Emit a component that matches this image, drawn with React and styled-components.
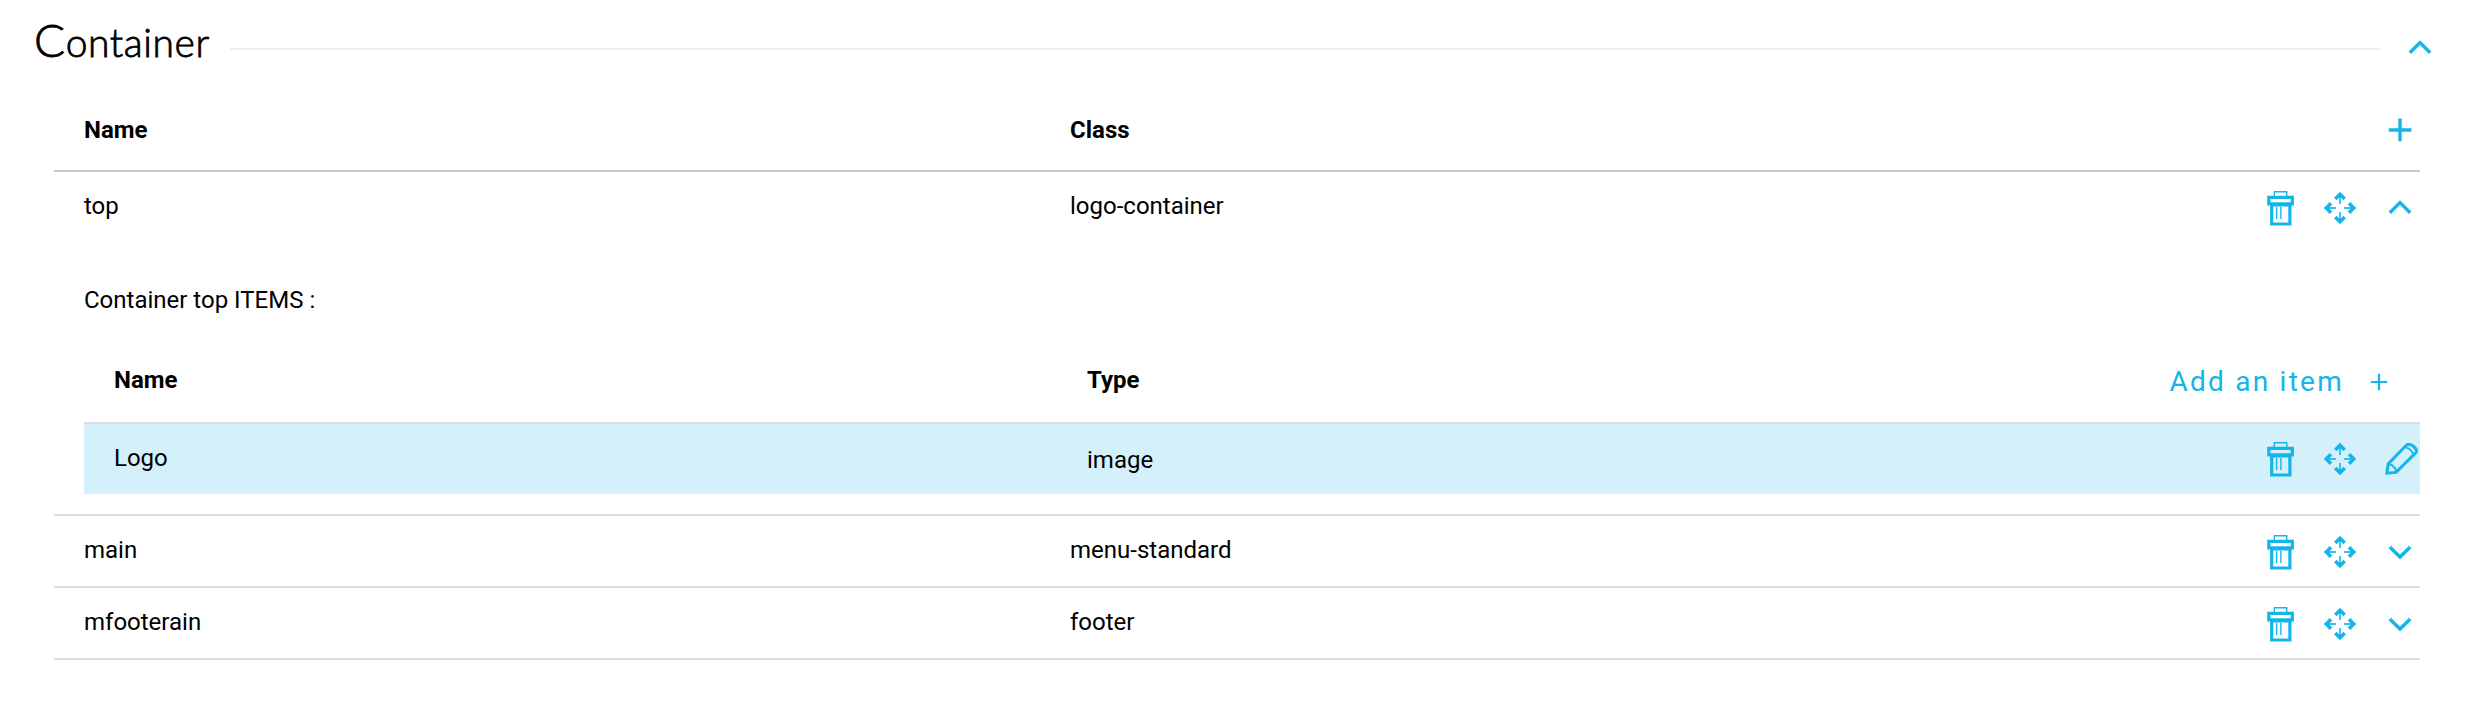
import React from "react";
import styled, { createGlobalStyle } from "styled-components";

const GlobalStyle = createGlobalStyle`
  * { box-sizing: border-box; }
  body {
    margin: 0;
    background: #fff;
    color: #000;
    font-family: Roboto, "Liberation Sans", sans-serif;
    font-size: 24px;
    line-height: 28px;
  }
`;

const Section = styled.section`
  padding-bottom: 48px;
`;

const SectionHeader = styled.header`
  display: flex;
  align-items: center;
  height: 98px;
  padding: 0 36px 0 34px;
`;

const Title = styled.h2`
  width: 196px;
  margin: 0 0 16px;
  font-family: Lato, sans-serif;
  font-weight: 300;
  font-size: 39px;
  line-height: 48px;
  letter-spacing: 0.6px;
  white-space: nowrap;
  -webkit-text-stroke: 0.8px #000;
  &::first-letter {
    font-size: 46px;
  }
`;

const Rule = styled.div`
  flex: 1;
  height: 2px;
  margin-right: 20px;
  background: #eee;
`;

const IconButton = styled.button`
  display: block;
  width: 40px;
  height: 40px;
  margin: 0 0 ${(p) => p.$lift || 0}px;
  padding: 0;
  border: 0;
  background: none;
  color: #13b5ea;
  cursor: pointer;
`;

const Svg = styled.svg`
  display: block;
  fill: none;
  stroke: currentColor;
`;

const Table = styled.div`
  margin: 0 56px 0 54px;
`;

const Row = styled.div`
  display: grid;
  grid-template-columns: ${(p) => (p.$nested ? 973 : 986)}px 1fr auto;
  align-items: start;
  height: ${(p) => (p.$open ? 70 : 72)}px;
  padding-left: 30px;
  border-bottom: ${(p) => (p.$open ? "0" : "2px solid #ddd")};
`;

const HeadRow = styled(Row)`
  height: ${(p) => (p.$nested ? 110 : 74)}px;
  border-bottom-color: ${(p) => (p.$nested ? "#ddd" : "#ccc")};
`;

const ItemRow = styled(Row)`
  height: 70px;
  border-bottom: 0;
  background: #d4f1fb;
`;

const Cell = styled.div`
  padding-top: ${(p) => p.$top || 20}px;
  font-weight: ${(p) => (p.$head ? 700 : 400)};
`;

const Actions = styled.div`
  display: flex;
  gap: 20px;
  padding-top: ${(p) => p.$top || 16}px;
`;

const Nested = styled.div`
  padding: 44px 0 20px 30px;
  border-bottom: 2px solid #ddd;
`;

const AddItem = styled.button`
  display: flex;
  align-items: center;
  gap: 26px;
  margin: 51px 32px 0 0;
  padding: 0;
  border: 0;
  background: none;
  color: #13b5ea;
  font: 400 28px/34px Roboto, sans-serif;
  letter-spacing: 2.25px;
  cursor: pointer;
`;

const Icon = ({ children, size = 40 }) => (
  <Svg width={size} height={size} viewBox={`0 0 ${size} ${size}`} aria-hidden="true">
    {children}
  </Svg>
);

const Trash = () => (
  <Icon>
    <path d="M14.3 8V3.7h12.4V8" strokeWidth="1.4" />
    <path d="M8.8 9.3h23.5v6.6H8.8z" strokeWidth="3.2" />
    <path d="M11.7 17h18.2v19H11.7z" strokeWidth="3.2" />
    <path d="M16.6 19v12M20.9 19v12" strokeWidth="1.4" />
  </Icon>
);

const Move = () => (
  <Icon>
    {[0, 90, 180, 270].map((angle) => (
      <g key={angle} transform={`rotate(${angle} 20 20)`}>
        <path d="M15.3 11 20 6.3l4.7 4.7" strokeWidth="3.6" />
        <path d="M20 7v9" strokeWidth="1.6" />
      </g>
    ))}
  </Icon>
);

const ChevronUp = () => (
  <Icon>
    <path d="M9.8 24.8 20 14.6l10.2 10.2" strokeWidth="3.5" />
  </Icon>
);

const ChevronDown = () => (
  <Icon>
    <path d="M9.8 14.9 20 25.1l10.2-10.2" strokeWidth="3.5" />
  </Icon>
);

const Plus = () => (
  <Icon>
    <path d="M8.8 20h22.6M20 8.6v22.6" strokeWidth="3.4" />
  </Icon>
);

const SmallPlus = () => (
  <Icon size={18}>
    <path d="M.8 9h16.4M9 .8v16.4" strokeWidth="2.2" />
  </Icon>
);

const Pencil = () => (
  <Icon>
    <path
      d="M6.8 34.2 8.2 25 25.8 6.8Q28.6 4 32.8 6.8 37.6 10.6 36.2 13.4L16 33.4z"
      strokeWidth="3"
    />
    <path d="M8.6 25.4q3.4-.6 4.6 2.2 2.8 1.4 2.8 5M26 8.6q5.4 1 7.2 7.2" strokeWidth="1.8" />
  </Icon>
);

const Act = ({ label, children, lift }) => (
  <IconButton type="button" aria-label={label} $lift={lift}>
    {children}
  </IconButton>
);

const RowActions = ({ top, children }) => (
  <Actions $top={top}>
    <Act label="Delete"><Trash /></Act>
    <Act label="Move"><Move /></Act>
    {children}
  </Actions>
);

const closedRows = [
  { name: "main", cls: "menu-standard" },
  { name: "mfooterain", cls: "footer" },
];

export default function App() {
  return (
    <Section>
      <GlobalStyle />
      <SectionHeader>
        <Title>Container</Title>
        <Rule />
        <Act label="Collapse" lift={2}><ChevronUp /></Act>
      </SectionHeader>
      <Table>
        <HeadRow>
          <Cell $head $top={18}>Name</Cell>
          <Cell $head $top={18}>Class</Cell>
          <Actions $top={12}>
            <Act label="Add"><Plus /></Act>
          </Actions>
        </HeadRow>
        <Row $open>
          <Cell>top</Cell>
          <Cell>logo-container</Cell>
          <RowActions>
            <Act label="Collapse"><ChevronUp /></Act>
          </RowActions>
        </Row>
        <Nested>
          <div>Container top ITEMS :</div>
          <HeadRow $nested>
            <Cell $head $top={52}>Name</Cell>
            <Cell $head $top={52}>Type</Cell>
            <AddItem type="button">
              Add an item
              <SmallPlus />
            </AddItem>
          </HeadRow>
          <ItemRow $nested>
            <Cell>Logo</Cell>
            <Cell $top={22}>image</Cell>
            <RowActions top={15}>
              <Act label="Edit"><Pencil /></Act>
            </RowActions>
          </ItemRow>
        </Nested>
        {closedRows.map((row) => (
          <Row key={row.name}>
            <Cell>{row.name}</Cell>
            <Cell>{row.cls}</Cell>
            <RowActions>
              <Act label="Expand"><ChevronDown /></Act>
            </RowActions>
          </Row>
        ))}
      </Table>
    </Section>
  );
}
